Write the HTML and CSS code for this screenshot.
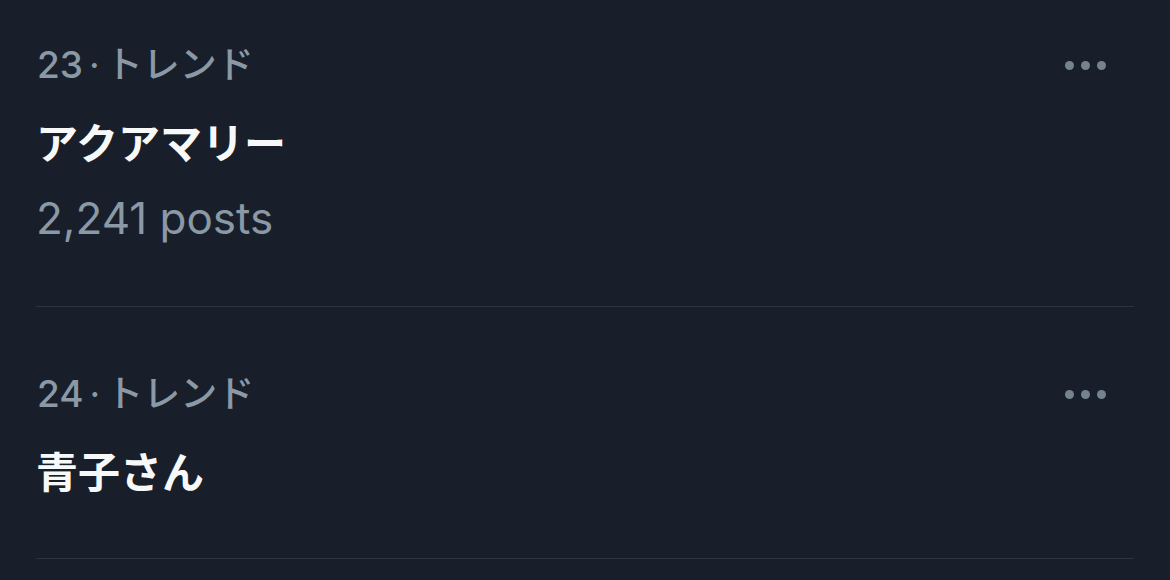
FILE: index.html
```html
<!DOCTYPE html>
<html lang="ja">
<head>
<meta charset="utf-8">
<link rel="stylesheet" href="styles.css">
</head>
<body>
<div class="list">
  <div class="trend">
    <div class="meta-row">
      <span class="meta">23<span class="sep">·</span>トレンド</span>
      <span class="more" aria-label="More"><i></i><i></i><i></i></span>
    </div>
    <div class="title">アクアマリー</div>
    <div class="count">2,241 posts</div>
  </div>
  <div class="trend">
    <div class="meta-row">
      <span class="meta">24<span class="sep">·</span>トレンド</span>
      <span class="more" aria-label="More"><i></i><i></i><i></i></span>
    </div>
    <div class="title">青子さん</div>
  </div>
</div>
</body>
</html>
```

FILE: styles.css
```css
html, body {
  margin: 0;
  padding: 0;
  background: #181f2a;
}
body {
  width: 1170px;
  height: 580px;
  overflow: hidden;
  font-family: "Inter", "Noto Sans CJK JP", sans-serif;
}
.list {
  margin-top: -22px;
}
.trend {
  margin: 0 36px;
  padding: 63px 28px 62px 0;
  border-bottom: 1px solid #2c3440;
}
.trend:last-child {
  padding-bottom: 62px;
}
.meta-row {
  display: flex;
  justify-content: space-between;
  align-items: center;
  height: 48px;
}
.meta {
  font-size: 37px;
  line-height: 48px;
  font-weight: 500;
  color: #8b98a5;
  padding-left: 1px;
}
.sep {
  display: inline-block;
  margin: 0 6px;
  font-weight: 400;
}
.more {
  display: flex;
  gap: 7px;
  align-items: center;
}
.more i {
  display: block;
  width: 9px;
  height: 9px;
  border-radius: 50%;
  background: #75828f;
}
.title {
  margin-top: 26px;
  font-family: "Noto Sans CJK JP", sans-serif;
  font-weight: 700;
  font-size: 42px;
  line-height: 52px;
  color: #f7f9f9;
}
.count {
  margin-top: 25px;
  font-size: 44px;
  line-height: 52px;
  font-weight: 400;
  color: #8b98a5;
}
```
